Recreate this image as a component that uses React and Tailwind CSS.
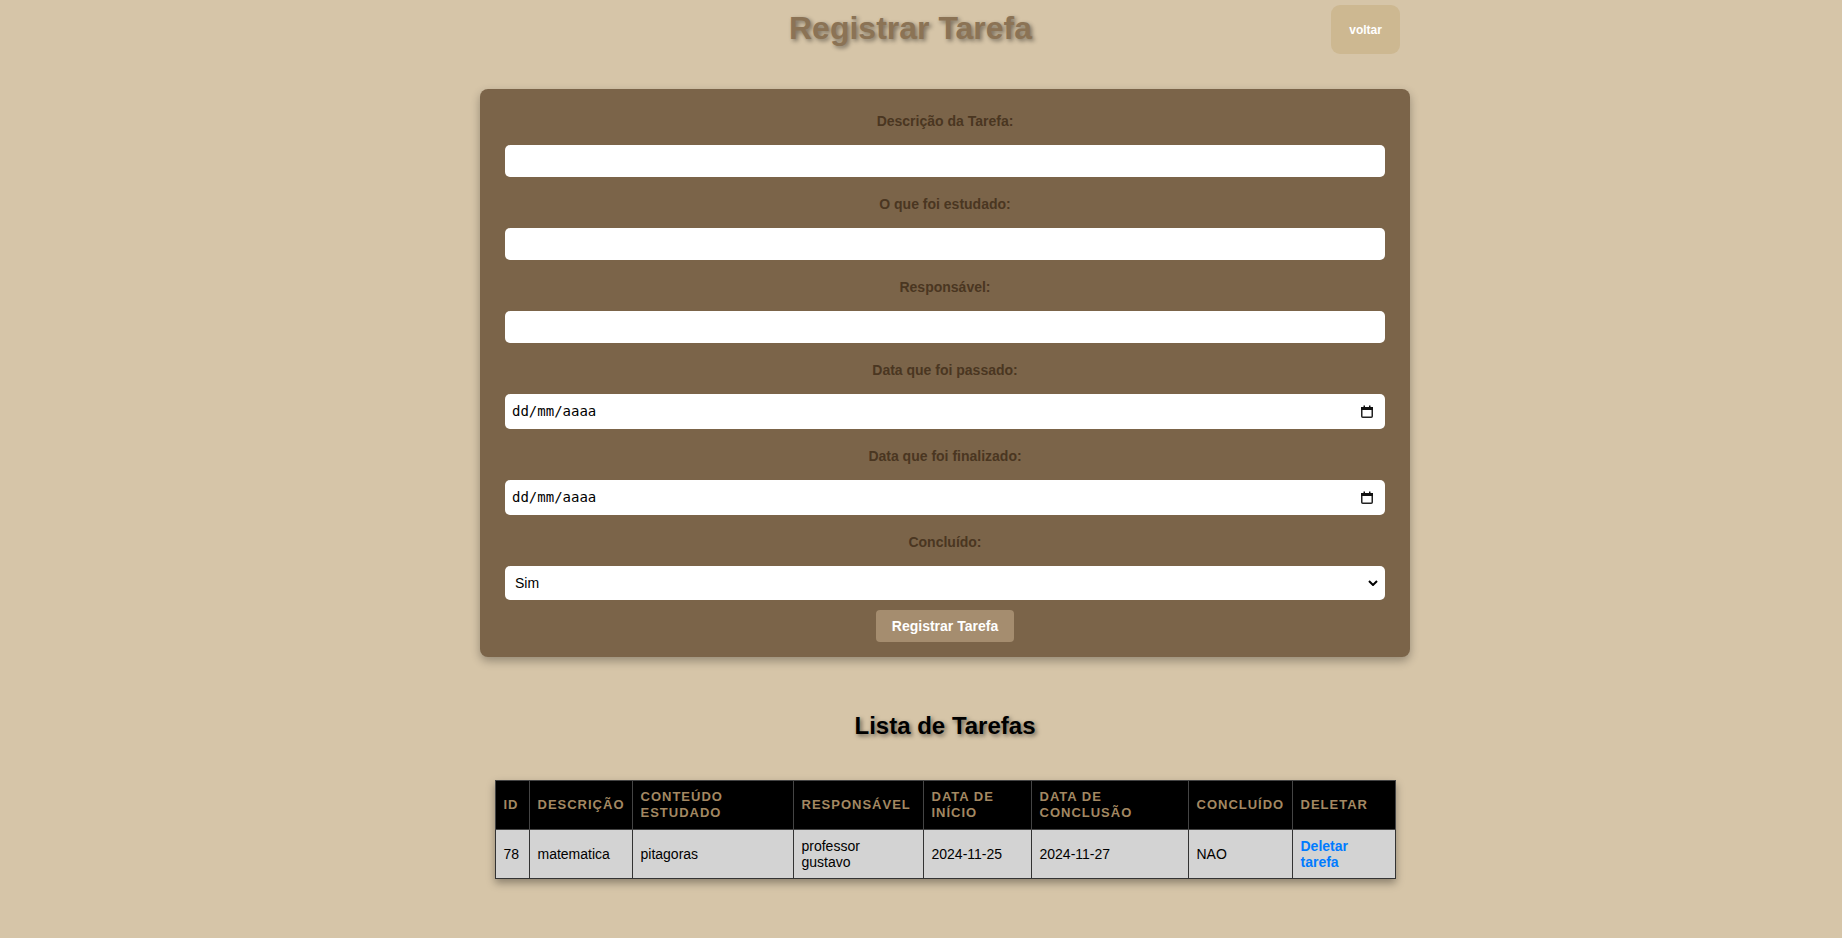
import React from 'react';

const fields = [
  { label: 'Descrição da Tarefa:', type: 'text' },
  { label: 'O que foi estudado:', type: 'text' },
  { label: 'Responsável:', type: 'text' },
  { label: 'Data que foi passado:', type: 'date' },
  { label: 'Data que foi finalizado:', type: 'date' },
];

const CalendarIcon = () => (
  <svg width="12" height="13" viewBox="0 0 12 13">
    <rect x="0.75" y="2.75" width="10.5" height="9.5" rx="1" fill="none" stroke="#222" strokeWidth="1.5" />
    <rect x="0" y="2" width="12" height="3" fill="#111" />
    <rect x="2.5" y="0.5" width="1.5" height="2" fill="#111" />
    <rect x="8" y="0.5" width="1.5" height="2" fill="#111" />
  </svg>
);

const DateField = () => (
  <div className="flex h-[35px] w-full items-center justify-between rounded-[5px] bg-white pl-[7px] pr-[12px]">
    <span className="font-['DejaVu_Sans_Mono',monospace] text-[14px] text-black">dd/mm/aaaa</span>
    <CalendarIcon />
  </div>
);

const columns = [
  { title: 'ID', w: 'w-[34px]' },
  { title: 'Descrição', w: 'w-[103px]' },
  { title: 'Conteúdo Estudado', w: 'w-[161px]' },
  { title: 'Responsável', w: 'w-[130px]' },
  { title: 'Data de Início', w: 'w-[108px]' },
  { title: 'Data de Conclusão', w: 'w-[157px]' },
  { title: 'Concluído', w: 'w-[104px]' },
  { title: 'Deletar', w: 'w-[103px]' },
];

export default function App() {
  return (
    <div className="min-h-screen bg-[#d6c5a8] pb-[40px] font-['Liberation_Sans',Arial,sans-serif]">
      <header className="flex h-[89px] items-start">
        <h1 className="ml-[789px] mt-[10px] text-[32px] leading-[37px] font-bold text-[#8b7355] [text-shadow:2px_2px_4px_rgba(0,0,0,0.45)]">
          Registrar Tarefa
        </h1>
        <button className="ml-[299px] mt-[5px] h-[49px] w-[69px] rounded-[9px] bg-[#cdb891] text-[12px] font-bold text-white">
          voltar
        </button>
      </header>

      <main className="flex flex-col items-center pl-[48px]">
        <form className="w-[930px] rounded-[8px] bg-[#7b6449] px-[25px] pt-[24px] pb-[15px] shadow-[0_4px_10px_rgba(0,0,0,0.3)]">
          {fields.map((f) => (
            <div key={f.label} className="mb-[19px]">
              <label className="mb-[16px] block text-center text-[14px] leading-[16px] font-bold text-[#4a3621]">
                {f.label}
              </label>
              {f.type === 'date' ? (
                <DateField />
              ) : (
                <input type="text" className="block h-[32px] w-full rounded-[5px] bg-white px-[8px] text-[14px] outline-none" />
              )}
            </div>
          ))}
          <div>
            <label className="mb-[16px] block text-center text-[14px] leading-[16px] font-bold text-[#4a3621]">
              Concluído:
            </label>
            <div className="relative">
              <select className="block h-[34px] w-full appearance-none rounded-[5px] bg-white pl-[10px] text-[14px] text-black outline-none">
                <option>Sim</option>
                <option>Não</option>
              </select>
              <svg className="pointer-events-none absolute right-[7px] top-[14px]" width="10" height="6" viewBox="0 0 10 6">
                <path d="M1 1l4 4 4-4" stroke="#000" strokeWidth="2" fill="none" />
              </svg>
            </div>
          </div>
          <div className="mt-[10px] flex justify-center">
            <button type="button" className="h-[32px] rounded-[4px] bg-[#a58d6f] px-[16px] text-[14px] font-bold text-white">
              Registrar Tarefa
            </button>
          </div>
        </form>

        <h2 className="mt-[55px] text-[24px] leading-[28px] font-bold text-black [text-shadow:2px_2px_4px_rgba(0,0,0,0.5)]">
          Lista de Tarefas
        </h2>

        <table className="mt-[40px] w-[900px] table-fixed border-collapse border border-[#444] shadow-[0_4px_8px_rgba(0,0,0,0.35)]">
          <thead>
            <tr className="bg-black">
              {columns.map((c) => (
                <th
                  key={c.title}
                  className={`${c.w} border border-[#444] px-[8px] py-[8px] text-left align-middle text-[13px] leading-[16px] font-bold uppercase tracking-[1px] text-[#a38862]`}
                >
                  {c.title}
                </th>
              ))}
            </tr>
          </thead>
          <tbody>
            <tr className="bg-[#d3d3d3] text-[14px] leading-[16px] text-black">
              <td className="border border-[#333] px-[8px] py-[8px]">78</td>
              <td className="border border-[#333] px-[8px] py-[8px]">matematica</td>
              <td className="border border-[#333] px-[8px] py-[8px]">pitagoras</td>
              <td className="border border-[#333] px-[8px] py-[8px]">professor<br />gustavo</td>
              <td className="border border-[#333] px-[8px] py-[8px]">2024-11-25</td>
              <td className="border border-[#333] px-[8px] py-[8px]">2024-11-27</td>
              <td className="border border-[#333] px-[8px] py-[8px]">NAO</td>
              <td className="border border-[#333] px-[8px] py-[8px]">
                <a href="#" className="font-bold text-[#007bff]">Deletar tarefa</a>
              </td>
            </tr>
          </tbody>
        </table>
      </main>
    </div>
  );
}
